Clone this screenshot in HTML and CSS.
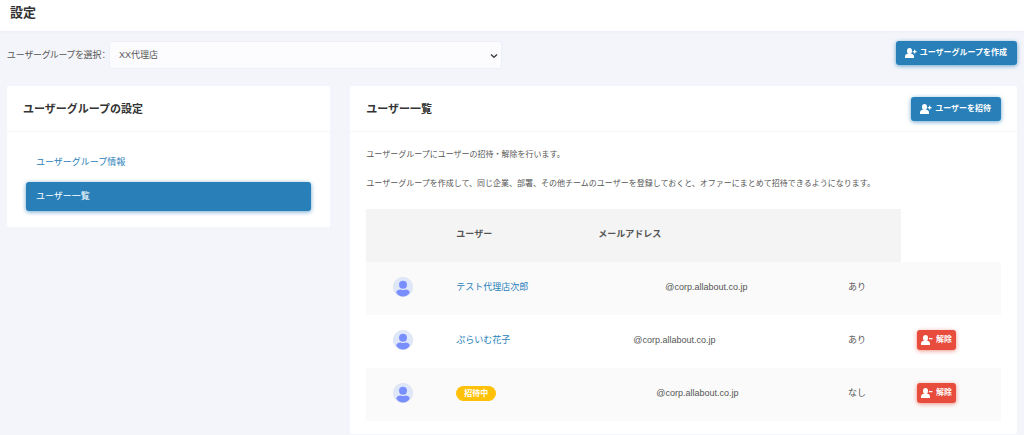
FILE: index.html
```html
<!DOCTYPE html>
<html lang="ja">
<head>
<meta charset="utf-8">
<meta name="viewport" content="width=device-width, initial-scale=1">
<title>設定</title>
<link rel="stylesheet" href="styles.css">
</head>
<body>
<svg class="sprite" aria-hidden="true">
  <symbol id="user-plus" viewBox="0 0 24 20">
    <ellipse cx="9" cy="6" rx="5" ry="5.800"/>
    <path d="M0 20v-3.500C0 13 3 12 6 11h6c3 1 6 2 6 5.500V20z"/>
    <path d="M18 3.500h2.500V6H23v2.500h-2.500V11H18V8.500h-2.500V6H18z"/>
  </symbol>
  <symbol id="user-minus" viewBox="0 0 24 20">
    <ellipse cx="9" cy="6" rx="5" ry="5.800"/>
    <path d="M0 20v-3.500C0 13 3 12 6 11h6c3 1 6 2 6 5.500V20z"/>
    <path d="M16 6h7v2.500h-7z"/>
  </symbol>
  <symbol id="avatar" viewBox="0 0 20 20">
    <circle cx="10" cy="10" r="9.700" fill="#dfe8fb" stroke="#d9dde6" stroke-width=".6"/>
    <circle cx="10" cy="7.800" r="4" fill="#7a8fff"/>
    <path d="M3.200 15.500c.4-2 2-3.100 4.200-3.100 1.600.8 3.600.8 5.200 0 2.200 0 3.800 1.100 4.200 3.100-1.400 2.600-4 3.900-6.800 3.900s-5.400-1.300-6.800-3.900z" fill="#7a8fff"/>
  </symbol>
</svg>

<header class="topbar"><h1 class="topbar-title">設定</h1></header>

<main class="page">
  <div class="toolbar">
    <label class="toolbar-label" for="group">ユーザーグループを選択：</label>
    <div class="select-wrap">
      <select class="select" id="group"><option>XX代理店</option></select>
      <svg class="chevron" viewBox="0 0 8 6" aria-hidden="true"><path d="M1 1.500 4 4.300 7 1.500"/></svg>
    </div>
    <button class="btn btn-primary toolbar-action" type="button"><svg class="btn-icon" aria-hidden="true"><use href="#user-plus"/></svg>ユーザーグループを作成</button>
  </div>

  <div class="columns">
    <section class="card">
      <div class="card-header"><h2 class="card-title">ユーザーグループの設定</h2></div>
      <nav class="side-nav">
        <a class="side-link" href="#info">ユーザーグループ情報</a>
        <a class="side-link active" href="#users" aria-current="page">ユーザー一覧</a>
      </nav>
    </section>

    <section class="card">
      <div class="card-header">
        <h2 class="card-title">ユーザー一覧</h2>
        <button class="btn btn-primary" type="button"><svg class="btn-icon" aria-hidden="true"><use href="#user-plus"/></svg>ユーザーを招待</button>
      </div>
      <div class="card-body">
        <p class="note">ユーザーグループにユーザーの招待・解除を行います。</p>
        <p class="note">ユーザーグループを作成して、同じ企業、部署、その他チームのユーザーを登録しておくと、オファーにまとめて招待できるようになります。</p>
        <table class="users">
          <colgroup><col class="c-avatar"><col class="c-user"><col class="c-mail"><col class="c-flag"><col class="c-action"></colgroup>
          <thead>
            <tr><th></th><th>ユーザー</th><th>メールアドレス</th><th></th></tr>
          </thead>
          <tbody>
            <tr>
              <td class="avatar-cell"><svg class="avatar" aria-hidden="true"><use href="#avatar"/></svg></td>
              <td><a class="user-link" href="#user1">テスト代理店次郎</a></td>
              <td><span class="mask mask-long"></span>@corp.allabout.co.jp</td>
              <td>あり</td>
              <td></td>
            </tr>
            <tr>
              <td class="avatar-cell"><svg class="avatar" aria-hidden="true"><use href="#avatar"/></svg></td>
              <td><a class="user-link" href="#user2">ぷらいむ花子</a></td>
              <td><span class="mask mask-short"></span>@corp.allabout.co.jp</td>
              <td>あり</td>
              <td><button class="btn btn-danger" type="button"><svg class="btn-icon" aria-hidden="true"><use href="#user-minus"/></svg>解除</button></td>
            </tr>
            <tr>
              <td class="avatar-cell"><svg class="avatar" aria-hidden="true"><use href="#avatar"/></svg></td>
              <td><span class="badge">招待中</span></td>
              <td><span class="mask mask-medium"></span>@corp.allabout.co.jp</td>
              <td>なし</td>
              <td><button class="btn btn-danger" type="button"><svg class="btn-icon" aria-hidden="true"><use href="#user-minus"/></svg>解除</button></td>
            </tr>
          </tbody>
        </table>
      </div>
    </section>
  </div>
</main>
</body>
</html>
```

FILE: styles.css
```css
* {
  box-sizing: border-box;
}

body {
  margin: 0;
  background: #f4f5fa;
  color: #555;
  font-family: "Liberation Sans", "Noto Sans CJK JP", sans-serif;
  font-size: 9px;
  line-height: 14px;
}

h1,
h2,
p {
  margin: 0;
}

.sprite {
  display: none;
}

.topbar {
  padding: 3px 10px 8px;
  background: #fff;
  box-shadow: 0 1px 2px rgba(60, 70, 110, 0.05);
}

.topbar-title {
  color: #333;
  font-size: 13px;
  line-height: 20px;
}

.page {
  padding: 10px 7px 2px;
}

.toolbar {
  display: flex;
  align-items: flex-start;
  margin-bottom: 17px;
}

.toolbar-label {
  flex: none;
  width: 102px;
  font-feature-settings: "palt";
  line-height: 28px;
  white-space: nowrap;
}

.select-wrap {
  position: relative;
  flex: 0 1 393px;
}

.select {
  display: block;
  width: 100%;
  height: 28px;
  padding: 0 20px 0 9px;
  border: 1px solid #edf0f8;
  border-radius: 3px;
  appearance: none;
  background: #fcfcff;
  color: #555;
  font: inherit;
}

.chevron {
  position: absolute;
  top: 12px;
  right: 4px;
  width: 8px;
  height: 6px;
  fill: none;
  stroke: #444;
  stroke-width: 1.5;
  pointer-events: none;
}

.toolbar-action {
  margin-left: auto;
}

.btn {
  display: inline-flex;
  align-items: center;
  gap: 3px;
  height: 24px;
  padding: 0 10px 0 9px;
  border: 0;
  border-radius: 3px;
  color: #fff;
  font: inherit;
  font-size: 8px;
  font-weight: 700;
  white-space: nowrap;
}

.btn-icon {
  width: 12px;
  height: 10px;
  fill: currentColor;
}

.btn-primary {
  background: #2980b9;
  box-shadow: 0 1px 4px rgba(41, 128, 185, 0.7);
}

.btn-danger {
  height: 20px;
  padding: 0 4px;
  background: #e74c3c;
  box-shadow: 0 1px 4px rgba(231, 76, 60, 0.6);
}

.columns {
  display: grid;
  grid-template-columns: repeat(12, minmax(0, 1fr));
  align-items: start;
  gap: 20px;
}

.card {
  grid-column: span 4;
  border-radius: 2px;
  background: #fff;
}

.card + .card {
  grid-column: span 8;
}

.card-header {
  display: flex;
  align-items: center;
  justify-content: space-between;
  height: 46px;
  padding: 0 16px;
  border-bottom: 1px solid #f6f6f8;
}

.card-title {
  color: #333;
  font-size: 11px;
}

.side-nav {
  display: grid;
  gap: 5px;
  padding: 16px 19px;
}

.side-link {
  padding: 7px 10px 8px;
  border-radius: 3px;
  color: #2980b9;
  text-decoration: none;
}

.side-link.active {
  background: #2980b9;
  box-shadow: 0 1px 4px rgba(41, 128, 185, 0.7);
  color: #fff;
}

.card-body {
  padding: 16px 16px 13px;
}

.note {
  margin-bottom: 15px;
  font-size: 8px;
}

.users {
  width: 100%;
  margin-top: 18px;
  border-collapse: collapse;
  table-layout: fixed;
}

.c-avatar {
  width: 74px;
}

.c-user {
  width: 142px;
}

.c-flag {
  width: 69px;
}

.c-action {
  width: 100px;
}

.users th,
.users td {
  height: 53px;
  padding: 0 16px 3px;
  text-align: left;
  vertical-align: middle;
  white-space: nowrap;
}

.users th {
  background: #f4f4f4;
}

.users tbody tr:nth-child(odd) {
  background: #fafafa;
}

.users .avatar-cell {
  text-align: center;
}

.avatar {
  display: inline-block;
  width: 20px;
  height: 20px;
  vertical-align: middle;
}

.user-link {
  color: #2980b9;
  text-decoration: none;
}

.mask {
  display: inline-block;
}

.mask-long {
  width: 67px;
}

.mask-medium {
  width: 58px;
}

.mask-short {
  width: 35px;
}

.badge {
  display: inline-block;
  padding: 0 8px;
  border-radius: 8px;
  background: #ffc107;
  color: #fff;
  font-size: 8px;
  font-weight: 700;
  line-height: 15px;
}
```
